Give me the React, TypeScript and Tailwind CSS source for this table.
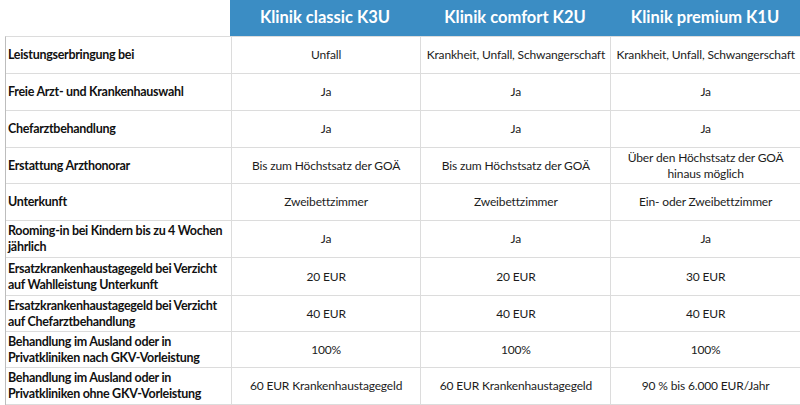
const plans = ["Klinik classic K3U", "Klinik comfort K2U", "Klinik premium K1U"];

const rows: { label: string; values: string[]; h: string }[] = [
  { label: "Leistungserbringung bei", values: ["Unfall", "Krankheit, Unfall, Schwangerschaft", "Krankheit, Unfall, Schwangerschaft"], h: "h-[37px]" },
  { label: "Freie Arzt- und Krankenhauswahl", values: ["Ja", "Ja", "Ja"], h: "h-[37px]" },
  { label: "Chefarztbehandlung", values: ["Ja", "Ja", "Ja"], h: "h-[37px]" },
  { label: "Erstattung Arzthonorar", values: ["Bis zum Höchstsatz der GOÄ", "Bis zum Höchstsatz der GOÄ", "Über den Höchstsatz der GOÄ\nhinaus möglich"], h: "h-[36px]" },
  { label: "Unterkunft", values: ["Zweibettzimmer", "Zweibettzimmer", "Ein- oder Zweibettzimmer"], h: "h-[37px]" },
  { label: "Rooming-in bei Kindern bis zu 4 Wochen\njährlich", values: ["Ja", "Ja", "Ja"], h: "h-[37px]" },
  { label: "Ersatzkrankenhaustagegeld bei Verzicht\nauf Wahlleistung Unterkunft", values: ["20 EUR", "20 EUR", "30 EUR"], h: "h-[38px]" },
  { label: "Ersatzkrankenhaustagegeld bei Verzicht\nauf Chefarztbehandlung", values: ["40 EUR", "40 EUR", "40 EUR"], h: "h-[36px]" },
  { label: "Behandlung im Ausland oder in\nPrivatkliniken nach GKV-Vorleistung", values: ["100%", "100%", "100%"], h: "h-[36px]" },
  { label: "Behandlung im Ausland oder in\nPrivatkliniken ohne GKV-Vorleistung", values: ["60 EUR Krankenhaustagegeld", "60 EUR Krankenhaustagegeld", "90 % bis 6.000 EUR/Jahr"], h: "h-[37px]" },
];

export default function App() {
  return (
    <div className="w-[800px] h-[405px] bg-white text-[#1c1c1c] font-['Lato',sans-serif] overflow-hidden">
      <div className="flex h-[36px]">
        <div className="w-[230px]" />
        <div className="flex flex-1 bg-[#3b8dc4]">
          {plans.map((p) => (
            <div key={p} className="w-[190px] flex items-center justify-center text-white font-bold text-[16.5px] pb-[1px]">
              {p}
            </div>
          ))}
        </div>
      </div>
      <div className="ml-[5px] border-l border-t border-l-[#bdbdbd] border-t-[#dcdcdc]">
        {rows.map((r) => (
          <div key={r.label} className={`flex ${r.h} border-b border-[#dcdcdc]`}>
            <div className="w-[225px] flex items-center pl-[2px] pr-[2px] font-bold text-[12.5px] tracking-[-0.3px] leading-[16px] text-[#111] whitespace-pre-line">
              {r.label}
            </div>
            {r.values.map((v, i) => (
              <div
                key={i}
                className="w-[190px] border-l border-[#dcdcdc] flex items-center justify-center text-center text-[12px] tracking-[-0.15px] leading-[16px] whitespace-pre-line"
              >
                {v}
              </div>
            ))}
          </div>
        ))}
      </div>
    </div>
  );
}
